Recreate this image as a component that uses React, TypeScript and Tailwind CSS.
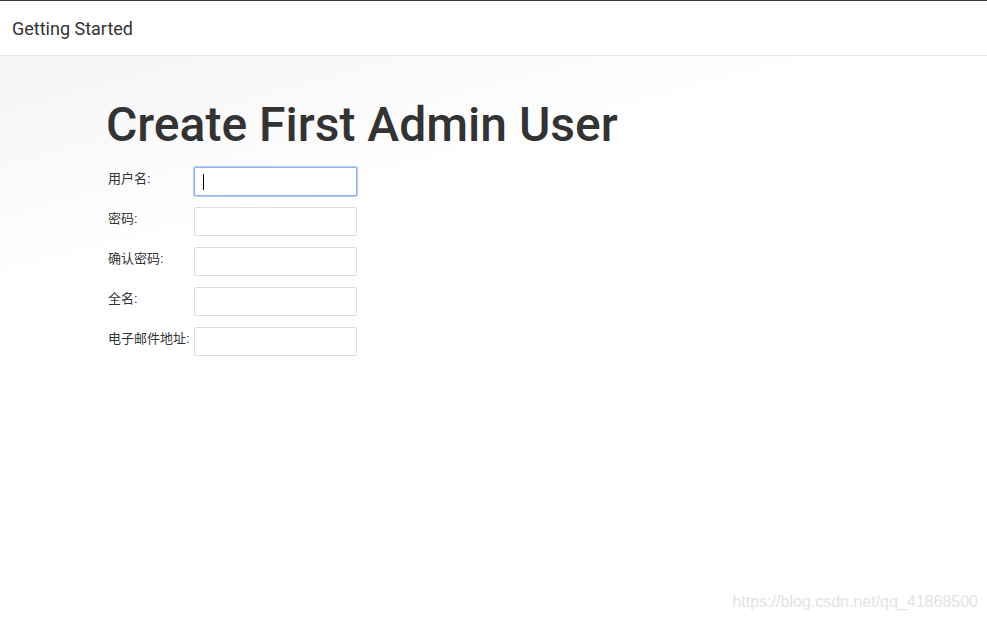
import React from 'react';

const fields = ['用户名:', '密码:', '确认密码:', '全名:', '电子邮件地址:'];

export default function App() {
  return (
    <div
      className="relative h-[624px] w-[987px] overflow-hidden bg-white text-[#333]"
      style={{ fontFamily: 'Roboto, "Noto Sans CJK SC", sans-serif' }}
    >
      {/* Header */}
      <header className="flex h-[56px] items-center border-t border-b border-t-[#3a3a3a] border-b-[#e5e5e5] bg-white px-3">
        <span className="text-[18px] text-[#333]">Getting Started</span>
      </header>

      <main className="h-[568px] bg-[linear-gradient(165deg,#f4f4f4_0%,#ffffff_28%,#ffffff_100%)] pl-[106px] pt-[41px]">
        <h1 className="text-[48px] font-medium leading-[56px] text-[#333]">
          Create First Admin User
        </h1>
        <form className="mt-[14px] flex flex-col gap-[11px] pl-[2px]">
          {fields.map((label, i) => (
            <div key={label} className="flex items-start">
              <label
                className="w-[86px] pt-[3px] text-[13px] leading-[18px] text-[#333]"
                style={{ fontFamily: '"Liberation Sans", "Noto Sans CJK SC", sans-serif' }}
              >
                {label}
              </label>
              <div
                className={`relative h-[29px] w-[163px] rounded-[2px] border bg-white ${
                  i === 0 ? 'border-[#8fb1f0] shadow-[0_0_0_1px_#b9cdf5]' : 'border-[#dcdcdc]'
                }`}
              >
                {i === 0 && <span className="absolute left-[8px] top-[6px] h-[16px] w-px bg-black" />}
              </div>
            </div>
          ))}
        </form>
      </main>

      <div
        className="absolute bottom-[10px] right-[9px] text-[16px] text-[#e3e3e3]"
        style={{ fontFamily: '"Liberation Sans", sans-serif' }}
      >
        https://blog.csdn.net/qq_41868500
      </div>
    </div>
  );
}
